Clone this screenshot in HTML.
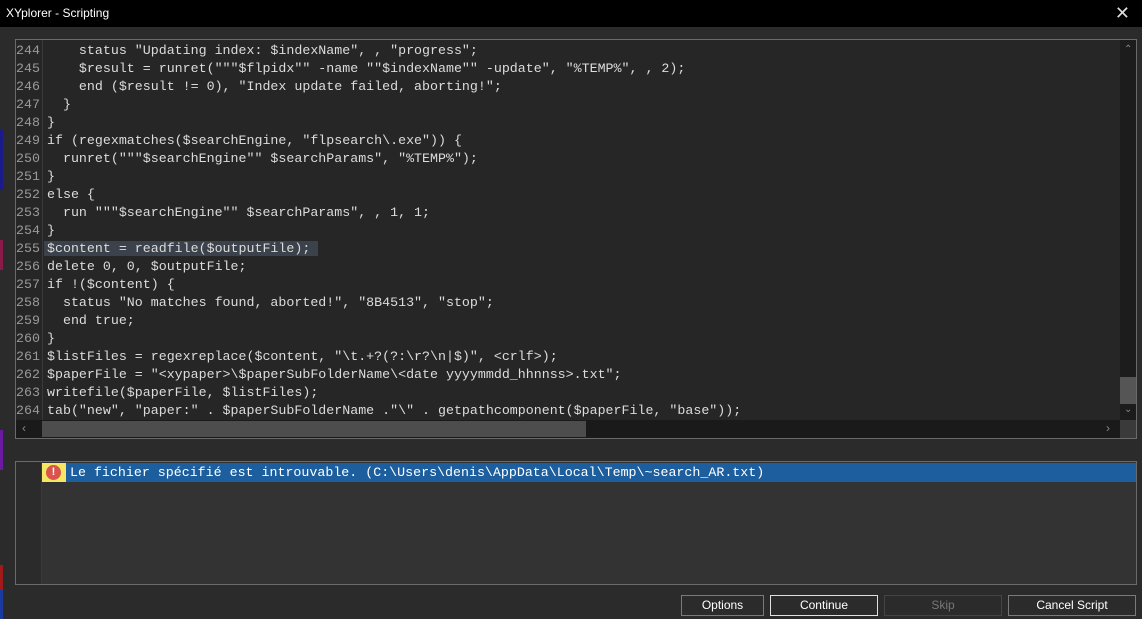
<!DOCTYPE html>
<html><head><style>
*{margin:0;padding:0;box-sizing:border-box}
body{width:1142px;height:619px;background:#2b2b2b;position:relative;overflow:hidden;font-family:"Liberation Sans",sans-serif}
.title{position:absolute;left:0;top:0;width:1142px;height:27px;background:#000;color:#fff;font-size:12px;line-height:27px;padding-left:6px}
.close{position:absolute;right:12px;top:5px;color:#ddd;font-size:18px;line-height:16px}
.ed{position:absolute;left:15px;top:39px;width:1122px;height:400px;border:1px solid #6a6a6a;background:#262626}
.gut{position:absolute;left:0;top:0;width:27px;height:380px;border-right:1px solid #3a3a3a;background:#262626}
.code{position:absolute;left:0;top:2px;font-family:"Liberation Mono",monospace;font-size:13.3px;line-height:18px;color:#dcdcdc;white-space:pre}
.ln{display:inline-block;width:31px;color:#9a9a9a;}
.hl{background:#3b424b;margin-left:-3px;padding-left:3px}
.vs{position:absolute;left:1104px;top:0;width:16px;height:380px;background:#1c1c1c}
.hs{position:absolute;left:0;top:380px;width:1104px;height:18px;background:#1a1a1a}
.corner{position:absolute;left:1104px;top:380px;width:16px;height:18px;background:#3a3a3a}
.err{position:absolute;left:15px;top:461px;width:1122px;height:124px;border:1px solid #6a6a6a;background:#333333}
.eg{position:absolute;left:0;top:0;width:26px;height:122px;background:#2b2b2b;border-right:1px solid #3a3a3a}
.row{position:absolute;left:26px;top:1px;width:1094px;height:19px;background:#1c5e9e;color:#fff;font-family:"Liberation Mono",monospace;font-size:13.3px;line-height:19px;padding-left:28px;white-space:pre}
.ico{position:absolute;left:0;top:0;width:24px;height:19px;background:#f5e663}
.ico div{position:absolute;left:4px;top:2px;width:15px;height:15px;border-radius:50%;background:#d9534f;color:#fff;font:bold 11px "Liberation Sans";text-align:center;line-height:15px}
.btn{position:absolute;top:595px;height:21px;border:1px solid #7a7a7a;color:#fff;font-size:12px;text-align:center;line-height:19px}
</style></head><body>
<div class="title">XYplorer - Scripting<span class="close">✕</span></div>
<div class="ed">
<div class="gut"></div>
<div class="code"><span class="ln">244</span>    status "Updating index: $indexName", , "progress";
<span class="ln">245</span>    $result = runret("""$flpidx"" -name ""$indexName"" -update", "%TEMP%", , 2);
<span class="ln">246</span>    end ($result != 0), "Index update failed, aborting!";
<span class="ln">247</span>  }
<span class="ln">248</span>}
<span class="ln">249</span>if (regexmatches($searchEngine, "flpsearch\.exe")) {
<span class="ln">250</span>  runret("""$searchEngine"" $searchParams", "%TEMP%");
<span class="ln">251</span>}
<span class="ln">252</span>else {
<span class="ln">253</span>  run """$searchEngine"" $searchParams", , 1, 1;
<span class="ln">254</span>}
<span class="ln">255</span><span class="hl">$content = readfile($outputFile); </span>
<span class="ln">256</span>delete 0, 0, $outputFile;
<span class="ln">257</span>if !($content) {
<span class="ln">258</span>  status "No matches found, aborted!", "8B4513", "stop";
<span class="ln">259</span>  end true;
<span class="ln">260</span>}
<span class="ln">261</span>$listFiles = regexreplace($content, "\t.+?(?:\r?\n|$)", &lt;crlf&gt;);
<span class="ln">262</span>$paperFile = "&lt;xypaper&gt;\$paperSubFolderName\&lt;date yyyymmdd_hhnnss&gt;.txt";
<span class="ln">263</span>writefile($paperFile, $listFiles);
<span class="ln">264</span>tab("new", "paper:" . $paperSubFolderName ."\" . getpathcomponent($paperFile, "base"));</div>
<div class="vs"><div style="position:absolute;left:4px;top:4px;color:#888;font-size:10px">&#8963;</div><div style="position:absolute;left:0;top:337px;width:16px;height:27px;background:#555"></div><div style="position:absolute;left:4px;top:364px;color:#888;font-size:10px">&#8964;</div></div>
<div class="hs"><div style="position:absolute;left:6px;top:1px;color:#888;font-size:12px">&lsaquo;</div><div style="position:absolute;left:26px;top:1px;width:544px;height:16px;background:#4d4d4d"></div><div style="position:absolute;left:1090px;top:1px;color:#888;font-size:12px">&rsaquo;</div></div>
<div class="corner"></div>
</div>
<div class="err"><div class="eg"></div><div class="row"><div class="ico"><div>!</div></div>Le fichier spécifié est introuvable. (C:\Users\denis\AppData\Local\Temp\~search_AR.txt)</div></div>
<div class="btn" style="left:681px;width:83px">Options</div>
<div class="btn" style="left:770px;width:108px;border-color:#e0e0e0">Continue</div>
<div class="btn" style="left:884px;width:118px;border-color:#444;color:#777">Skip</div>
<div class="btn" style="left:1008px;width:128px">Cancel Script</div>
<div style="position:absolute;left:0;top:130px;width:3px;height:60px;background:#1a1a8a"></div>
<div style="position:absolute;left:0;top:240px;width:3px;height:30px;background:#8a1a4a"></div>
<div style="position:absolute;left:0;top:430px;width:3px;height:40px;background:#6a1aa0"></div>
<div style="position:absolute;left:0;top:565px;width:3px;height:25px;background:#a01a1a"></div>
<div style="position:absolute;left:0;top:590px;width:3px;height:29px;background:#1a3aa0"></div>
</body></html>
